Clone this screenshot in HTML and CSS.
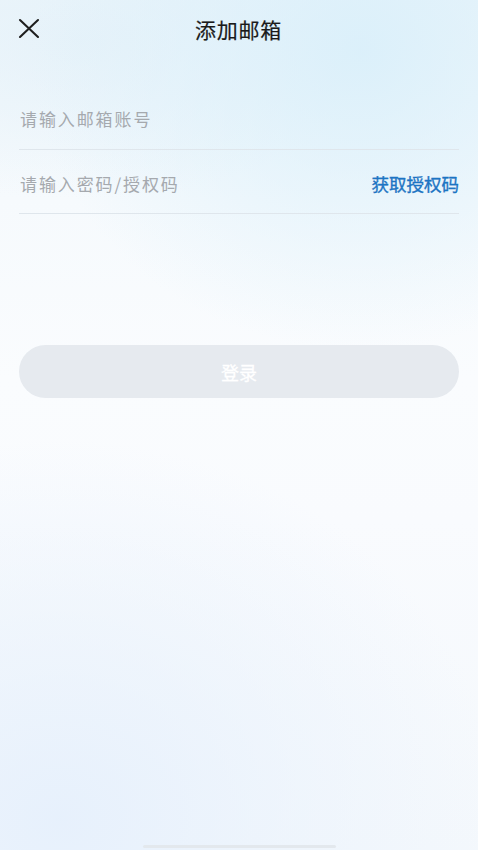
FILE: index.html
```html
<!DOCTYPE html>
<html lang="zh">
<head>
<meta charset="utf-8">
<title>添加邮箱</title>
<link rel="stylesheet" href="styles.css">
</head>
<body>
<div class="page">
  <header class="nav">
    <button class="close" aria-label="关闭">
      <svg width="22" height="22" viewBox="0 0 22 22"><path d="M2 2 L20 19 M20 2 L2 19" stroke="#1f1f1f" stroke-width="2.1" stroke-linecap="round" fill="none"/></svg>
    </button>
    <h1 class="title">添加邮箱</h1>
    <span class="spacer"></span>
  </header>
  <form class="form">
    <div class="field">
      <span class="placeholder">请输入邮箱账号</span>
    </div>
    <div class="field">
      <span class="placeholder">请输入密码/授权码</span>
      <a class="link">获取授权码</a>
    </div>
    <div class="login">登录</div>
  </form>
  <div class="home-indicator"></div>
</div>
</body>
</html>
```
FILE: styles.css
```css
* { box-sizing: border-box; }
html, body { margin: 0; padding: 0; }
body {
  font-family: "Noto Sans CJK SC", "Noto Sans", sans-serif;
  width: 478px;
  height: 850px;
  overflow: hidden;
}
.page {
  position: relative;
  width: 478px;
  height: 850px;
  background:
    radial-gradient(ellipse 330px 300px at 360px 50px, rgba(217,239,250,0.9), rgba(217,239,250,0) 100%),
    radial-gradient(ellipse 300px 160px at 80px 40px, rgba(228,241,249,0.8), rgba(228,241,249,0) 100%),
    radial-gradient(ellipse 440px 380px at 60px 820px, rgba(230,240,252,0.95), rgba(233,242,252,0.5) 55%, rgba(240,246,253,0) 100%),
    linear-gradient(180deg, #eef6fb 0px, #f6fafd 200px, #fafcfe 380px, #f9fbfe 520px, #f4f8fc 850px);
  display: flex;
  flex-direction: column;
}
.nav {
  height: 58px;
  display: flex;
  align-items: center;
  padding: 0 18px 0 17px;
}
.close {
  width: 24px;
  height: 24px;
  padding: 0;
  border: 0;
  background: none;
  display: flex;
  align-items: center;
  justify-content: center;
}
.title {
  flex: 1;
  margin: 0;
  text-align: center;
  font-size: 21px;
  font-weight: 400;
  color: #1a1a1a;
  letter-spacing: 0.8px;
  -webkit-text-stroke: 0.2px #1a1a1a;
}
.spacer { width: 24px; }
.form {
  padding: 0 19px;
  margin-top: 29px;
}
.field {
  height: 64px;
  border-bottom: 1px solid #dfe6ec;
  display: flex;
  align-items: center;
  justify-content: space-between;
  padding-left: 1px;
}
.field:first-child { height: 63px; }
.field + .field { padding-top: 4px; }
.placeholder {
  font-size: 17px;
  color: #a5a9ae;
  letter-spacing: 1.9px;
}
.link {
  font-size: 17.5px;
  color: #1c74c3;
  font-weight: 400;
  -webkit-text-stroke: 0.35px #1c74c3;
}
.login {
  margin-top: 131px;
  height: 53px;
  border-radius: 27px;
  background: #e6eaef;
  color: #fff;
  font-size: 18px;
  font-weight: 400;
  -webkit-text-stroke: 0.3px #fff;
  display: flex;
  align-items: center;
  justify-content: center;
}
.home-indicator {
  position: absolute;
  left: 143px;
  bottom: 2px;
  width: 193px;
  height: 3px;
  border-radius: 2px;
  background: #e3e8ed;
}
```
